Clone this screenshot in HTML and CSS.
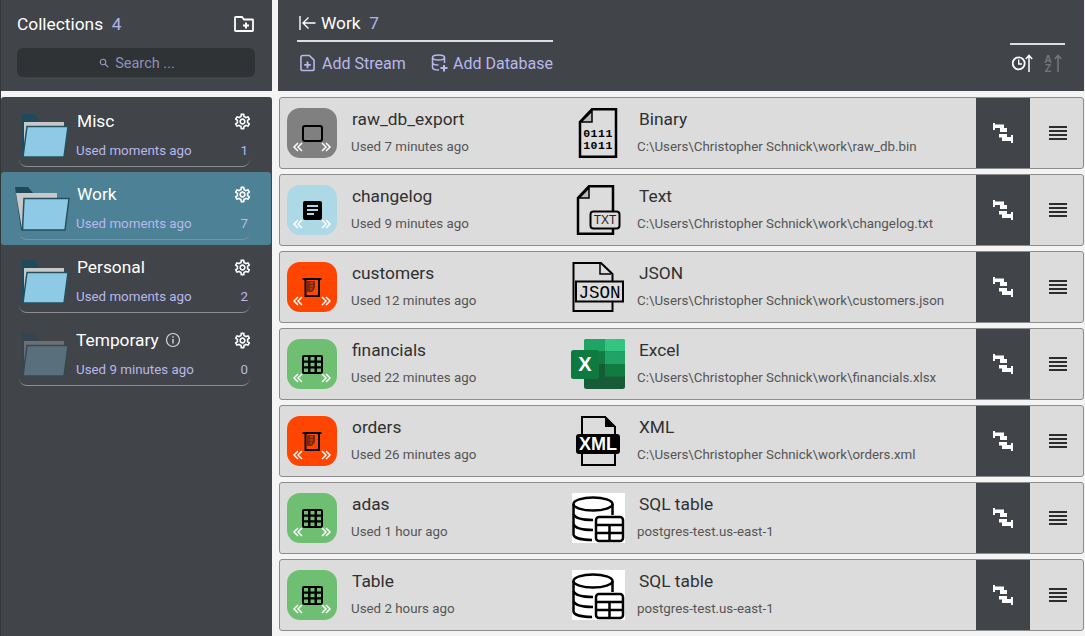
FILE: index.html
```html
<!DOCTYPE html>
<html lang="en">
<head>
<meta charset="utf-8">
<title>Collections</title>
<link rel="stylesheet" href="styles.css">
</head>
<body>
<svg class="sprite" xmlns="http://www.w3.org/2000/svg">
  <symbol id="folder" viewBox="0 0 55 44">
    <path d="M7 0H20L24 8H10V43H7Z" fill="#1f4a5c"/>
    <path d="M9 8H49V12H13L9 32Z" fill="#c9c9c9"/>
    <path d="M12 12.500H53L49 43H8Z" fill="#8ecae6" stroke="#24505f" stroke-width="1.500"/>
  </symbol>
  <symbol id="folder-open" viewBox="0 0 55 44">
    <path d="M0 0H13L18 6H40V11H9L7 43H6Z" fill="#1f4a5c"/>
    <path d="M1 6H42V11H10L7 42Z" fill="#c9c9c9"/>
    <path d="M9 11.500H54L50 43H7.500Z" fill="#8ecae6" stroke="#24505f" stroke-width="1.500"/>
  </symbol>
  <symbol id="gear" viewBox="0 0 24 24">
    <path fill="currentColor" d="M19.430 12.980c.04-.32.07-.64.07-.98s-.03-.66-.07-.98l2.110-1.650c.19-.15.24-.42.12-.64l-2-3.460c-.12-.22-.39-.3-.61-.22l-2.490 1c-.52-.4-1.080-.73-1.690-.98l-.38-2.650A.488.488 0 0 0 14 2h-4c-.25 0-.46.18-.49.42l-.38 2.650c-.61.25-1.170.59-1.690.98l-2.490-1c-.23-.09-.49 0-.61.22l-2 3.460c-.13.22-.07.49.12.64l2.110 1.650c-.04.32-.07.65-.07.98s.03.66.07.98l-2.110 1.650c-.19.15-.24.42-.12.64l2 3.460c.12.22.39.3.61.22l2.490-1c.52.4 1.080.73 1.690.98l.38 2.650c.03.24.24.42.49.42h4c.25 0 .46-.18.49-.42l.38-2.650c.61-.25 1.170-.59 1.690-.98l2.490 1c.23.09.49 0 .61-.22l2-3.460c.12-.22.07-.49-.12-.64l-2.110-1.650zM17.450 11.270c.04.31.05.52.05.73s-.02.43-.05.73l-.14 1.130.89.7 1.080.84-.7 1.210-1.270-.51-1.040-.42-.9.68c-.43.32-.84.56-1.250.73l-1.060.43-.16 1.130-.2 1.350h-1.400l-.19-1.350-.16-1.130-1.060-.43c-.43-.18-.83-.41-1.230-.71l-.91-.7-1.060.43-1.270.51-.7-1.210 1.080-.84.89-.7-.14-1.130c-.03-.31-.05-.54-.05-.74s.02-.43.05-.73l.14-1.130-.89-.7-1.080-.84.7-1.210 1.270.51 1.040.42.9-.68c.43-.32.84-.56 1.250-.73l1.060-.43.16-1.130.2-1.350h1.390l.19 1.350.16 1.130 1.060.43c.43.18.83.41 1.230.71l.91.7 1.060-.43 1.270-.51.7 1.210-1.070.85-.89.7.14 1.130zM12 8c-2.210 0-4 1.790-4 4s1.790 4 4 4 4-1.790 4-4-1.790-4-4-4zm0 6c-1.100 0-2-.9-2-2s.9-2 2-2 2 .9 2 2-.9 2-2 2z"/>
  </symbol>
  <symbol id="swap" viewBox="0 0 20 20">
    <path fill="#fff" d="M0 0H2V1.500H11V5H14V9H7V5H2V7H0Z"/>
    <path fill="#fff" d="M6 11H14V14H18V12H20V20H18V18H9V14.500H6Z"/>
  </symbol>
  <symbol id="menu" viewBox="0 0 18 14">
    <path fill="#2d2d2d" d="M0 0H18V2H0ZM0 4H18V6H0ZM0 8H18V10H0ZM0 12H18V14H0Z"/>
  </symbol>
  <symbol id="chev" viewBox="0 0 50 50">
    <path d="M11 35L7 39L11 43M15 35L11 39L15 43M35 35L39 39L35 43M39 35L43 39L39 43" fill="none" stroke="#fff" stroke-width="1.500"/>
  </symbol>
  <symbol id="ic-stream" viewBox="0 0 24 24">
    <rect x="3" y="5" width="19" height="15" rx="2" fill="none" stroke="#000" stroke-width="2"/>
  </symbol>
  <symbol id="ic-text" viewBox="0 0 24 24">
    <rect x="3" y="3" width="19" height="19" rx="2" fill="#000"/>
    <path fill="#add8e6" d="M7 7H18V9H7ZM7 11H18V13H7ZM7 15H14V17H7Z"/>
  </symbol>
  <symbol id="ic-beaker" viewBox="0 0 24 24">
    <path d="M2.500 4H21.500" stroke="#000" stroke-width="2"/>
    <path d="M5.500 4V21H19V4" fill="none" stroke="#000" stroke-width="2"/>
    <path d="M7 6H15V13L12 17H7Z" fill="#7a2a10"/>
    <path d="M10 8H13M10 11H13M10 14H12" stroke="#ff4500" stroke-width="1"/>
  </symbol>
  <symbol id="ic-grid" viewBox="0 0 24 24">
    <rect x="2" y="3" width="21" height="19" rx="2" fill="#000"/>
    <path fill="#6fbf73" d="M4 5H8V8.500H4ZM10.500 5H14.500V8.500H10.500ZM17 5H21V8.500H17ZM4 10.800H8V14.300H4ZM10.500 10.800H14.500V14.300H10.500ZM17 10.800H21V14.300H17ZM4 16.500H8V20H4ZM10.500 16.500H14.500V20H10.500ZM17 16.500H21V20H17Z"/>
  </symbol>
  <symbol id="t-sql" viewBox="0 0 54 50">
    <rect x="1" width="53" height="50" fill="#fff"/>
    <g fill="none" stroke="#000" stroke-width="2.500">
      <ellipse cx="22" cy="11" rx="19.500" ry="6.500"/>
      <path d="M2.500 11V41C2.500 45 11 47 21 47"/>
      <path d="M41.500 11V22"/>
      <path d="M2.500 21C4 25 12 27 22 27"/>
      <path d="M2.500 31C4 35 12 37 22 37"/>
    </g>
    <rect x="25" y="24" width="27" height="24" rx="3" fill="#fff" stroke="#000" stroke-width="2.500"/>
    <path d="M25 32H52M25 40H52M38.500 32V48" stroke="#000" stroke-width="2.500"/>
  </symbol>
</svg>

<aside class="sidebar">
  <header class="side-head">
    <div class="side-title">
      <span class="side-label">Collections <span class="num">&nbsp;4</span></span>
      <svg class="new-folder" viewBox="0 0 20 16"><path d="M1 2.500V14.500Q1 15 1.500 15H18.500Q19 15 19 14.500V4Q19 3.500 18.500 3.500H10L8 1H1.500Q1 1 1 2.500Z" fill="none" stroke="#fff" stroke-width="1.800"/><path d="M11 6.500H13V8.500H15V10.500H13V12.500H11V10.500H9V8.500H11Z" fill="#fff"/></svg>
    </div>
    <div class="search">
      <svg class="search-icon" viewBox="0 0 12 12"><circle cx="4.800" cy="4.800" r="3.300" fill="none" stroke="#9a9ac4" stroke-width="1.300"/><path d="M7.300 7.300L11 11" stroke="#9a9ac4" stroke-width="1.500"/></svg>
      <span>Search ...</span>
    </div>
  </header>
  <nav class="side-list">
    <div class="coll">
      <div class="coll-in">
        <svg class="folder"><use href="#folder"/></svg>
        <div class="coll-text">
          <div class="coll-top"><span class="coll-name">Misc</span><svg class="gear"><use href="#gear"/></svg></div>
          <div class="coll-bot"><span>Used moments ago</span><span>1</span></div>
        </div>
      </div>
    </div>
    <div class="coll is-active">
      <div class="coll-in">
        <svg class="folder"><use href="#folder-open"/></svg>
        <div class="coll-text">
          <div class="coll-top"><span class="coll-name">Work</span><svg class="gear"><use href="#gear"/></svg></div>
          <div class="coll-bot"><span>Used moments ago</span><span>7</span></div>
        </div>
      </div>
    </div>
    <div class="coll">
      <div class="coll-in">
        <svg class="folder"><use href="#folder"/></svg>
        <div class="coll-text">
          <div class="coll-top"><span class="coll-name">Personal</span><svg class="gear"><use href="#gear"/></svg></div>
          <div class="coll-bot"><span>Used moments ago</span><span>2</span></div>
        </div>
      </div>
    </div>
    <div class="coll">
      <div class="coll-in">
        <svg class="folder is-dim"><use href="#folder"/></svg>
        <div class="coll-text">
          <div class="coll-top"><span class="coll-name is-temp">Temporary<svg class="info-icon" viewBox="0 0 16 16"><circle cx="8" cy="8" r="6.500" fill="none" stroke="#d8d8d8" stroke-width="1.200"/><path d="M7.300 7H8.700V11.500H7.300ZM7.300 4.300H8.700V5.700H7.300Z" fill="#d8d8d8"/></svg></span><svg class="gear"><use href="#gear"/></svg></div>
          <div class="coll-bot"><span>Used 9 minutes ago</span><span>0</span></div>
        </div>
      </div>
    </div>
  </nav>
</aside>

<main class="main">
  <header class="main-head">
    <div class="head-left">
      <div class="head-title">
        <svg class="back" viewBox="0 0 17 16"><path d="M1 1V15" stroke="#fff" stroke-width="1.400"/><path d="M16.500 8H4M9.500 2.500L4 8L9.500 13.500" fill="none" stroke="#fff" stroke-width="1.400"/></svg>
        <span>Work <span class="num">&nbsp;7</span></span>
      </div>
      <div class="head-actions">
        <span class="action">
          <svg class="action-icon" viewBox="0 0 16 18"><path d="M1 3Q1 1 3 1H10L15 6V15Q15 17 13 17H3Q1 17 1 15Z" fill="none" stroke="#b8b8ec" stroke-width="1.700"/><path d="M7 7.500H9V10H11.500V12H9V14.500H7V12H4.500V10H7Z" fill="#b8b8ec"/></svg>
          Add Stream
        </span>
        <span class="action">
          <svg class="action-icon db" viewBox="0 0 17 18"><g fill="none" stroke="#b8b8ec" stroke-width="1.500"><ellipse cx="7.500" cy="3.500" rx="6" ry="2.500"/><path d="M1.500 3.500V13.500C1.500 15 4 16 8 16M13.500 3.500V9M1.500 8.500C1.500 10 4 11 7.500 11"/></g><path d="M12 11H14V13H16.500V15H14V17.500H12V15H9.500V13H12Z" fill="#b8b8ec"/></svg>
          Add Database
        </span>
      </div>
    </div>
    <div class="head-sort">
      <svg class="sort-icon" viewBox="0 0 52 22">
        <circle cx="6.700" cy="10.300" r="6" fill="none" stroke="#fff" stroke-width="1.800"/>
        <path d="M6.700 6.500V11H10" fill="none" stroke="#fff" stroke-width="1.400"/>
        <path d="M17 19V3M13.800 6L17 2.300L20.200 6" fill="none" stroke="#fff" stroke-width="1.500"/>
        <text class="az" x="36" y="10">A</text>
        <text class="az" x="36" y="19">Z</text>
        <path d="M46 19V3M42.800 6L46 2.300L49.200 6" fill="none" stroke="#777" stroke-width="1.500"/>
      </svg>
    </div>
  </header>

  <section class="rows">
    <article class="row">
      <div class="tile t-grey"><svg class="tile-icon"><use href="#ic-stream"/></svg><svg class="tile-chev"><use href="#chev"/></svg></div>
      <div class="info"><div class="name">raw_db_export</div><div class="sub">Used 7 minutes ago</div></div>
      <svg class="type-icon" viewBox="0 0 54 50">
        <path d="M21 1.300H45V48.700H9V14Z" fill="none" stroke="#000" stroke-width="2.500"/>
        <path d="M21 3V14H10Z" fill="#bbb" stroke="#000" stroke-width="1.500"/>
        <text class="bin" x="27" y="28.500">0111</text><text class="bin" x="27" y="41">1011</text>
      </svg>
      <div class="info type"><div class="name">Binary</div><div class="sub">C:\Users\Christopher Schnick\work\raw_db.bin</div></div>
      <div class="swap-cell"><svg class="swap-icon"><use href="#swap"/></svg></div>
      <div class="menu-cell"><svg class="menu-icon"><use href="#menu"/></svg></div>
    </article>

    <article class="row">
      <div class="tile t-blue"><svg class="tile-icon"><use href="#ic-text"/></svg><svg class="tile-chev"><use href="#chev"/></svg></div>
      <div class="info"><div class="name">changelog</div><div class="sub">Used 9 minutes ago</div></div>
      <svg class="type-icon" viewBox="0 0 54 50">
        <path d="M18 1.300H42V48.700H7V13Z" fill="none" stroke="#000" stroke-width="2.500"/>
        <path d="M18 3V13H8Z" fill="#bbb" stroke="#000" stroke-width="1.500"/>
        <rect x="19.500" y="26.500" width="29" height="17" rx="3" fill="#dcdcdc" stroke="#000" stroke-width="2"/>
        <text class="txt" x="34" y="39">TXT</text>
      </svg>
      <div class="info type"><div class="name">Text</div><div class="sub">C:\Users\Christopher Schnick\work\changelog.txt</div></div>
      <div class="swap-cell"><svg class="swap-icon"><use href="#swap"/></svg></div>
      <div class="menu-cell"><svg class="menu-icon"><use href="#menu"/></svg></div>
    </article>

    <article class="row">
      <div class="tile t-orange"><svg class="tile-icon"><use href="#ic-beaker"/></svg><svg class="tile-chev"><use href="#chev"/></svg></div>
      <div class="info"><div class="name">customers</div><div class="sub">Used 12 minutes ago</div></div>
      <svg class="type-icon" viewBox="0 0 54 50">
        <path d="M2.500 49V1H30L41.500 12V49Z" fill="none" stroke="#000" stroke-width="2"/>
        <path d="M29 2V12H40" fill="none" stroke="#000" stroke-width="1.500"/>
        <rect x="5" y="19.500" width="47" height="20" fill="#dcdcdc" stroke="#000" stroke-width="2"/>
        <text class="json" x="28.500" y="35.500">JSON</text>
      </svg>
      <div class="info type"><div class="name">JSON</div><div class="sub">C:\Users\Christopher Schnick\work\customers.json</div></div>
      <div class="swap-cell"><svg class="swap-icon"><use href="#swap"/></svg></div>
      <div class="menu-cell"><svg class="menu-icon"><use href="#menu"/></svg></div>
    </article>

    <article class="row">
      <div class="tile t-green"><svg class="tile-icon"><use href="#ic-grid"/></svg><svg class="tile-chev"><use href="#chev"/></svg></div>
      <div class="info"><div class="name">financials</div><div class="sub">Used 22 minutes ago</div></div>
      <svg class="type-icon" viewBox="0 0 54 50">
        <rect x="13" width="41" height="50" rx="2.500" fill="#185c37"/>
        <path d="M13 2.500Q13 0 15.500 0H34V12.500H13Z" fill="#21a366"/>
        <path d="M34 0H51.500Q54 0 54 2.500V12.500H34Z" fill="#33c481"/>
        <path d="M13 12.500H34V25H13Z" fill="#107c41"/>
        <path d="M34 12.500H54V25H34Z" fill="#21a366"/>
        <path d="M34 25H54V37.500H34Z" fill="#107c41"/>
        <rect x="0" y="11" width="28" height="29" rx="2.500" fill="#0f7a40"/>
        <text class="xl" x="14" y="32">X</text>
      </svg>
      <div class="info type"><div class="name">Excel</div><div class="sub">C:\Users\Christopher Schnick\work\financials.xlsx</div></div>
      <div class="swap-cell"><svg class="swap-icon"><use href="#swap"/></svg></div>
      <div class="menu-cell"><svg class="menu-icon"><use href="#menu"/></svg></div>
    </article>

    <article class="row">
      <div class="tile t-orange"><svg class="tile-icon"><use href="#ic-beaker"/></svg><svg class="tile-chev"><use href="#chev"/></svg></div>
      <div class="info"><div class="name">orders</div><div class="sub">Used 26 minutes ago</div></div>
      <svg class="type-icon" viewBox="0 0 54 50">
        <path d="M11 49V1H34L44 11V49Z" fill="none" stroke="#000" stroke-width="2"/>
        <path d="M34 0V11H45L34 0Z" fill="#000"/>
        <rect x="5" y="18" width="44" height="20" rx="3" fill="#000"/>
        <text class="xml" x="27" y="34">XML</text>
      </svg>
      <div class="info type"><div class="name">XML</div><div class="sub">C:\Users\Christopher Schnick\work\orders.xml</div></div>
      <div class="swap-cell"><svg class="swap-icon"><use href="#swap"/></svg></div>
      <div class="menu-cell"><svg class="menu-icon"><use href="#menu"/></svg></div>
    </article>

    <article class="row">
      <div class="tile t-green"><svg class="tile-icon"><use href="#ic-grid"/></svg><svg class="tile-chev"><use href="#chev"/></svg></div>
      <div class="info"><div class="name">adas</div><div class="sub">Used 1 hour ago</div></div>
      <svg class="type-icon"><use href="#t-sql"/></svg>
      <div class="info type"><div class="name">SQL table</div><div class="sub">postgres-test.us-east-1</div></div>
      <div class="swap-cell"><svg class="swap-icon"><use href="#swap"/></svg></div>
      <div class="menu-cell"><svg class="menu-icon"><use href="#menu"/></svg></div>
    </article>

    <article class="row">
      <div class="tile t-green"><svg class="tile-icon"><use href="#ic-grid"/></svg><svg class="tile-chev"><use href="#chev"/></svg></div>
      <div class="info"><div class="name">Table</div><div class="sub">Used 2 hours ago</div></div>
      <svg class="type-icon"><use href="#t-sql"/></svg>
      <div class="info type"><div class="name">SQL table</div><div class="sub">postgres-test.us-east-1</div></div>
      <div class="swap-cell"><svg class="swap-icon"><use href="#swap"/></svg></div>
      <div class="menu-cell"><svg class="menu-icon"><use href="#menu"/></svg></div>
    </article>
  </section>
</main>
</body>
</html>
```

FILE: styles.css
```css
* { box-sizing: border-box; }
html, body { margin: 0; height: 100%; }
body {
  display: flex;
  width: 1085px;
  height: 636px;
  overflow: hidden;
  background: #f4f4f4;
  font-family: Roboto, "Liberation Sans", sans-serif;
  color: #fff;
}
.sprite { position: absolute; width: 0; height: 0; overflow: hidden; }
.num { color: #b4b4ec; }

/* sidebar */
.sidebar {
  width: 272px;
  flex: none;
  display: flex;
  flex-direction: column;
  gap: 6px;
  border-left: 1px solid #33383c;
}
.side-head {
  height: 91px;
  flex: none;
  background: #414449;
  padding: 0 16px;
}
.side-title {
  display: flex;
  justify-content: space-between;
  align-items: center;
  height: 48px;
}
.side-label { font-size: 17.330px; }
.new-folder { width: 20px; height: 16px; margin-right: 2px; margin-bottom: 1px; }
.search {
  width: 238px;
  height: 29px;
  background: #303336;
  border-radius: 6px;
  display: flex;
  align-items: center;
  justify-content: center;
  gap: 6px;
  padding: 1px 0 0 2px;
  font-size: 14.500px;
  color: #8f8fb8;
}
.search-icon { width: 10px; height: 10px; }
.side-list {
  flex: 1;
  background: #414449;
  padding-top: 2px;
  border-radius: 3px 3px 0 0;
}
.coll {
  height: 73px;
  width: 270px;
  padding: 0 21px 0 18px;
}
.coll.is-active { background: #4d8296; border-radius: 3px; }
.coll-in {
  display: flex;
  align-items: flex-start;
  height: 68px;
  border-bottom: 1px solid #8b8e92;
  border-radius: 0 0 8px 8px;
}
.folder {
  width: 55px;
  height: 44px;
  margin: 15px 0 0 -4px;
  flex: none;
}
.folder.is-dim { opacity: .32; }
.coll-text {
  flex: 1;
  margin-left: 6px;
  padding-top: 12px;
}
.coll-top {
  display: flex;
  justify-content: space-between;
  align-items: center;
  height: 20px;
  padding-left: 1px;
  font-size: 17.330px;
}
.coll-name { display: flex; align-items: center; gap: 6px; }
.coll-name.is-temp { margin-left: -1px; }
.info-icon { width: 16px; height: 16px; }
.gear { width: 19px; height: 19px; color: #fff; margin-right: -2px; }
.coll-bot {
  display: flex;
  justify-content: space-between;
  margin-top: 12px;
  line-height: 16px;
  font-size: 13.330px;
  color: #b8b8ec;
  padding-right: 2px;
}

/* main */
.main {
  width: 806px;
  flex: none;
  margin-left: 6px;
  display: flex;
  flex-direction: column;
  gap: 6px;
}
.main-head {
  height: 91px;
  flex: none;
  background: #414449;
  display: flex;
  justify-content: space-between;
  padding: 0 19px;
}
.head-left { width: 256px; }
.head-title {
  height: 42px;
  border-bottom: 2px solid #dedede;
  display: flex;
  align-items: center;
  gap: 5px;
  padding: 5px 0 0 2px;
  font-size: 17.330px;
}
.back { width: 17px; height: 16px; }
.head-actions {
  display: flex;
  justify-content: space-between;
  align-items: center;
  height: 42px;
  font-size: 16px;
  color: #b8b8ec;
  padding: 0 0 0 3px;
}
.action { display: flex; align-items: center; gap: 7px; }
.action-icon { width: 15px; height: 18px; }
.action-icon.db { width: 17px; margin-right: -2px; }
.head-sort {
  width: 55px;
  margin-top: 43px;
  height: 34px;
  border-top: 2px solid #dedede;
  padding: 8px 0 0 2px;
}
.sort-icon { display: block; width: 52px; height: 22px; }
.az { font: 700 10.500px "Liberation Sans", sans-serif; fill: #777; text-anchor: middle; }

.rows {
  display: flex;
  flex-direction: column;
  gap: 5px;
  padding-left: 1px;
}
.row {
  height: 72px;
  width: 805px;
  background: #dcdcdc;
  border: 1px solid #8c8c8c;
  border-radius: 3px;
  display: flex;
  align-items: stretch;
  color: #333;
}
.tile {
  position: relative;
  width: 50px;
  height: 50px;
  margin: 10px 0 0 7px;
  border-radius: 13px;
  flex: none;
  display: flex;
  align-items: center;
  justify-content: center;
}
.t-grey { background: #808080; }
.t-blue { background: #add8e6; }
.t-orange { background: #ff4500; }
.t-green { background: #6fbf73; }
.tile-icon { width: 24px; height: 24px; }
.tile-chev { position: absolute; inset: 0; width: 50px; height: 50px; }
.info {
  flex: none;
  padding-top: 11px;
  width: 220px;
  margin-left: 14px;
}
.info.type { width: 339px; margin-left: 12px; }
.name {
  font-size: 17.330px;
  line-height: 20px;
  padding-left: 1px;
  color: #303030;
}
.info.type .name { padding-left: 2px; }
.sub {
  margin-top: 10px;
  font-size: 13.330px;
  line-height: 16px;
  color: #555;
}
.type-icon {
  width: 54px;
  height: 50px;
  margin-top: 10px;
  flex: none;
}
.bin { font: 700 11.500px "Liberation Mono", monospace; text-anchor: middle; letter-spacing: .5px; }
.txt { font: 400 12px "Liberation Sans", sans-serif; text-anchor: middle; fill: #222; }
.json { font: 400 17.500px "Liberation Mono", monospace; text-anchor: middle; }
.xl { font: 700 20px "Liberation Sans", sans-serif; fill: #fff; text-anchor: middle; }
.xml { font: 700 18px "Liberation Sans", sans-serif; fill: #fff; text-anchor: middle; }
.swap-cell {
  width: 54px;
  flex: none;
  background: #414449;
  display: flex;
  align-items: center;
  justify-content: center;
}
.swap-icon { width: 20px; height: 20px; }
.menu-cell {
  flex: 1;
  display: flex;
  align-items: center;
  justify-content: center;
}
.menu-icon { width: 18px; height: 14px; margin-left: 2px; }
```
